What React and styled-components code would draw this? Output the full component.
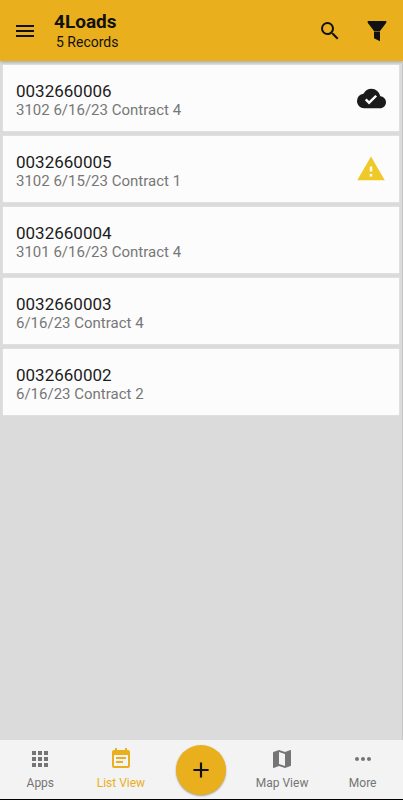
import React from "react";
import styled, { createGlobalStyle } from "styled-components";
import {
  MdAdd,
  MdApps,
  MdCloudDone,
  MdEventNote,
  MdMap,
  MdMenu,
  MdMoreHoriz,
  MdSearch,
  MdWarning,
} from "react-icons/md";

const records = [
  { id: "0032660006", detail: "3102 6/16/23 Contract 4", status: "synced" },
  { id: "0032660005", detail: "3102 6/15/23 Contract 1", status: "warning" },
  { id: "0032660004", detail: "3101 6/16/23 Contract 4" },
  { id: "0032660003", detail: "6/16/23 Contract 4" },
  { id: "0032660002", detail: "6/16/23 Contract 2" },
];

const FilterIcon = () => (
  <svg width="24" height="24" viewBox="0 0 24 24" fill="currentColor">
    <path d="M2.7 2h18.6v1.8L15 12H9L2.7 3.8zM9 12.6h6v9.6l-6-3z" />
  </svg>
);

const StatusIcon = ({ status }) => {
  if (status === "synced") return <MdCloudDone size={29} color="#1a1a1a" />;
  if (status === "warning") return <MdWarning size={30} color="#efc927" />;
  return null;
};

export default function App() {
  return (
    <Screen>
      <GlobalStyle />
      <Header>
        <IconButton aria-label="Menu">
          <MdMenu size={24} />
        </IconButton>
        <Heading>
          <h1>4Loads</h1>
          <p>5 Records</p>
        </Heading>
        <Actions>
          <IconButton aria-label="Search">
            <MdSearch size={24} />
          </IconButton>
          <IconButton aria-label="Filter">
            <FilterIcon />
          </IconButton>
        </Actions>
      </Header>
      <List>
        {records.map((record) => (
          <Card key={record.id}>
            <Info>
              <h2>{record.id}</h2>
              <p>{record.detail}</p>
            </Info>
            <Status>
              <StatusIcon status={record.status} />
            </Status>
          </Card>
        ))}
      </List>
      <Nav>
        <NavItem>
          <MdApps size={24} />
          Apps
        </NavItem>
        <NavItem $active>
          <MdEventNote size={24} />
          List View
        </NavItem>
        <AddCell>
          <AddButton aria-label="Add record">
            <MdAdd size={26} />
          </AddButton>
        </AddCell>
        <NavItem>
          <MdMap size={24} />
          Map View
        </NavItem>
        <NavItem>
          <MdMoreHoriz size={24} />
          More
        </NavItem>
      </Nav>
    </Screen>
  );
}

const GlobalStyle = createGlobalStyle`
  * {
    box-sizing: border-box;
  }
  body {
    margin: 0;
    font-family: Roboto, sans-serif;
    background-color: #dbdbdb;
  }
  h1, h2, p, ul {
    margin: 0;
    padding: 0;
  }
  button {
    font-family: inherit;
    border: none;
    padding: 0;
    background: none;
    cursor: pointer;
  }
`;
const Screen = styled.div`
  display: flex;
  flex-direction: column;
  min-height: 100vh;
`;
const Header = styled.header`
  display: flex;
  align-items: center;
  padding: 10px 14px 10px 13px;
  background-color: #e9af1c;
  box-shadow: 0 1px 3px rgba(0, 0, 0, 0.25);
`;
const IconButton = styled.button`
  display: flex;
  color: #111;
`;
const Heading = styled.div`
  flex: 1;
  margin-left: 17px;
  color: #111;
  h1 {
    font-size: 19px;
    line-height: 24px;
    font-weight: 700;
  }
  p {
    padding-left: 2px;
    font-size: 14px;
    line-height: 17px;
  }
`;
const Actions = styled.div`
  display: flex;
  gap: 23px;
`;
const List = styled.ul`
  flex: 1;
  display: flex;
  flex-direction: column;
  gap: 5px;
  padding: 4px 3px;
  border-right: 1px solid #c6c6c6;
  list-style: none;
`;
const Card = styled.li`
  display: flex;
  align-items: center;
  justify-content: space-between;
  min-height: 66px;
  padding: 0 13px;
  background-color: #fcfcfc;
  box-shadow: 0 0 1px rgba(255, 255, 255, 0.8);
`;
const Info = styled.div`
  padding-top: 3px;
  h2 {
    color: #1c1c1c;
    font-size: 17px;
    line-height: 20px;
    font-weight: 400;
  }
  p {
    color: #777;
    font-size: 15px;
    line-height: 18px;
  }
`;
const Status = styled.span`
  display: flex;
`;
const Nav = styled.nav`
  display: flex;
  height: 60px;
  background-color: #f3f3f3;
  border-bottom: 1px solid #000;
`;
const NavItem = styled.button`
  flex: 1;
  display: flex;
  flex-direction: column;
  align-items: center;
  justify-content: center;
  gap: 4px;
  padding-bottom: 2px;
  color: ${({ $active }) => ($active ? "#e9af1c" : "#757575")};
  font-size: 12px;
  line-height: 16px;
`;
const AddCell = styled.div`
  flex: 1;
  display: flex;
  align-items: center;
  justify-content: center;
`;
const AddButton = styled.button`
  display: flex;
  align-items: center;
  justify-content: center;
  width: 50px;
  height: 50px;
  border-radius: 50%;
  color: #111;
  background-color: #e9af1c;
  box-shadow: 0 1px 2px rgba(0, 0, 0, 0.35);
`;
